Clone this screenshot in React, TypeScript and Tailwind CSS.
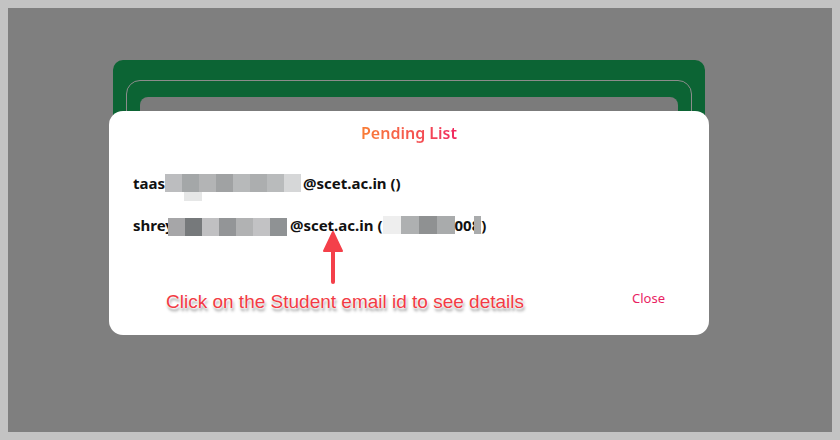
import React from 'react';

const rowOne = ['#bcbdbf', '#a4a7a8', '#b3b4b5', '#a0a2a3', '#b7b9ba', '#acaeaf', '#b9bbbc', '#d6d7d8'];
const rowTwo = ['#a6a6a8', '#76797b', '#c0c0c2', '#939597', '#b1b2b3', '#c2c2c4', '#8f9294'];
const rowTwoId = ['#eeeeee', '#aeb0b1', '#8f9192', '#a9abac'];

function Pixels({ colors, w }: { colors: string[]; w: number }) {
  return (
    <span className="inline-flex h-[18px] align-middle">
      {colors.map((c, i) => (
        <span key={i} className="h-full" style={{ backgroundColor: c, width: w }} />
      ))}
    </span>
  );
}

export default function App() {
  return (
    <div className="w-[840px] h-[440px] bg-[#c3c3c3] p-2 font-['Noto_Sans',sans-serif]">
      <div className="relative h-full w-full bg-[#7f7f7f] overflow-hidden">
        {/* page behind the overlay */}
        <div className="ml-[105px] mt-[52px] w-[592px] h-[240px] rounded-[10px] bg-[#0c6434] px-[13px] pt-[20px]">
          <div className="h-full rounded-[14px] border border-[#8c8c8c] px-[13px] pt-[16px]">
            <div className="h-full rounded-[8px] bg-[#7b7b7b]" />
          </div>
        </div>

        {/* modal */}
        <div className="absolute left-[101px] top-[103px] w-[600px] h-[224px] rounded-[14px] bg-white px-6 pt-[10px]">
          <h2 className="text-center text-[16px] font-semibold leading-[24px] bg-gradient-to-r from-[#f97d33] to-[#f0255f] bg-clip-text text-transparent w-fit mx-auto">
            Pending List
          </h2>
          <div className="mt-[28px] flex flex-col gap-[22px] text-[15px] font-bold text-[#111] leading-[20px]">
            <div className="relative flex items-center">
              <span>taas</span>
              <Pixels colors={rowOne} w={17} />
              <span className="absolute left-[51px] top-[19px] h-[9px] w-[18px] bg-[#e6e7e7]" />
              <span className="ml-[2px]">@scet.ac.in ()</span>
            </div>
            <div className="flex items-center">
              <span>shrey</span>
              <span className="-ml-[6px]"><Pixels colors={rowTwo} w={17} /></span>
              <span className="ml-[3px]">@scet.ac.in (</span>
              <Pixels colors={rowTwoId} w={18} />
              <span>008</span>
              <span className="-ml-[6px] inline-block h-[18px] w-[7px] bg-[#a9abac]" />
              <span>)</span>
            </div>
          </div>
          <div className="absolute right-[44px] top-[178px] text-[13px] text-[#e91e63]">Close</div>
        </div>

        {/* annotation */}
        <svg className="absolute left-[308px] top-[222px]" width="34" height="60" viewBox="0 0 34 60">
          <line x1="17" y1="14" x2="17" y2="52" stroke="#f4404a" strokeWidth="4" strokeLinecap="round" />
          <path d="M17 2 L26 21 L8 21 Z" fill="#f4404a" stroke="#f4404a" strokeWidth="2" strokeLinejoin="round" />
        </svg>
        <div className="absolute left-[158px] top-[281px] text-[19px] leading-[26px] text-[#f23a44] font-['Liberation_Sans',sans-serif] [text-shadow:0_0_1px_#fff,0_0_2px_#fff,0_0_3px_#fff,1px_3px_3px_rgba(0,0,0,0.45)]">
          Click on the Student email id to see details
        </div>
      </div>
    </div>
  );
}
